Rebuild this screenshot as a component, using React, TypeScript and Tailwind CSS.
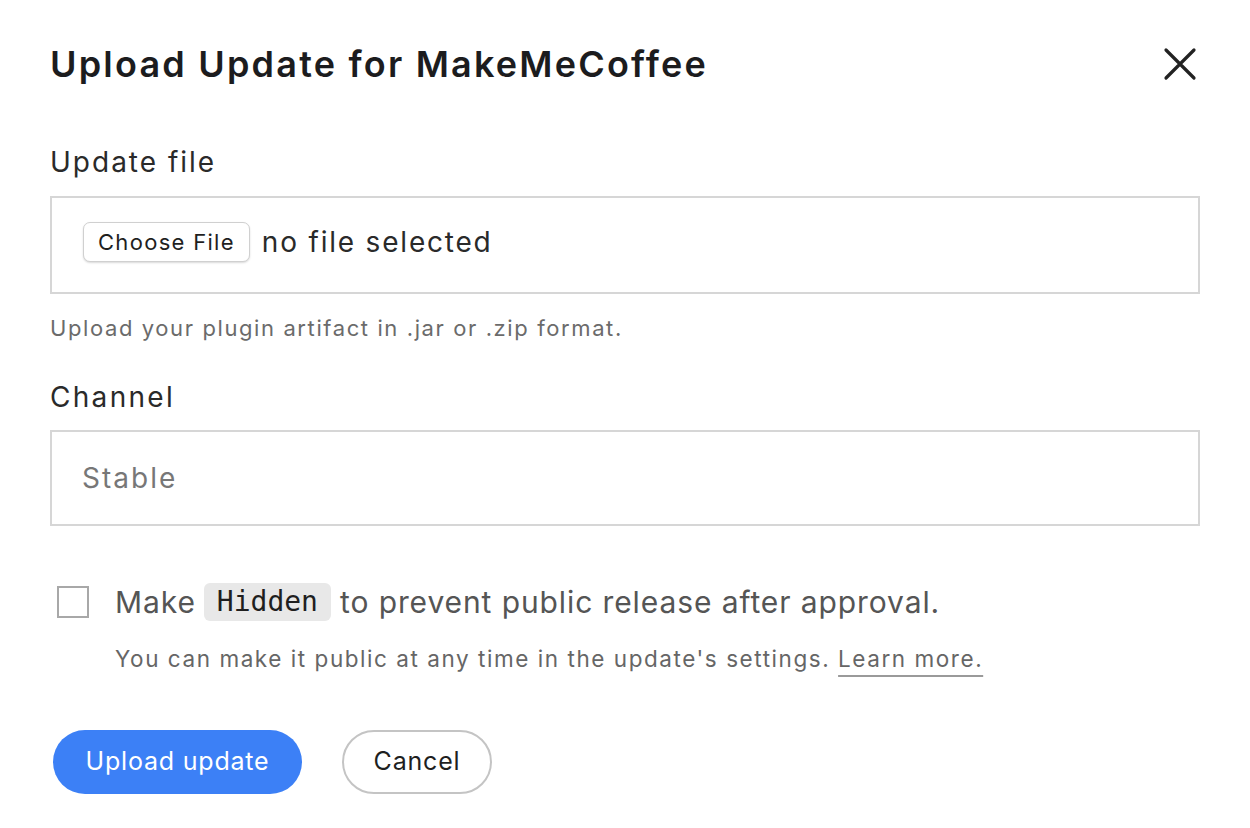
import React from "react";

export default function App() {
  return (
    <div className="w-[1250px] h-[828px] bg-white px-[50px] pt-[42px] font-['Inter',sans-serif] overflow-hidden">
      <div className="flex items-center justify-between">
        <h1 className="text-[36px] leading-[44px] font-semibold text-[#1c1c1e] tracking-[2.2px]">
          Upload Update for MakeMeCoffee
        </h1>
        <svg width="34" height="34" viewBox="0 0 34 34" className="mr-[3px]" fill="none">
          <path d="M3 3L31 31M31 3L3 31" stroke="#222222" strokeWidth="3.2" strokeLinecap="round" />
        </svg>
      </div>

      <div className="mt-[58px] text-[28px] leading-[36px] text-[#2a2a2a] tracking-[2px]">Update file</div>
      <div className="mt-[16px] h-[98px] border-2 border-[#d6d6d6] flex items-center pl-[31px] pb-[6px] gap-[12px]">
        <div className="h-[40px] px-[14px] flex items-center rounded-[7px] border border-[#d0d0d0] bg-white shadow-[0_1px_2px_rgba(0,0,0,0.15)] text-[22px] text-[#1f1f1f] tracking-[1.3px]">
          Choose File
        </div>
        <span className="text-[28px] text-[#2a2a2a] tracking-[1.8px]">no file selected</span>
      </div>
      <div className="mt-[20px] text-[22px] leading-[28px] text-[#6b6b6b] tracking-[1.6px]">
        Upload your plugin artifact in .jar or .zip format.
      </div>

      <div className="mt-[37px] text-[28px] leading-[36px] text-[#2a2a2a] tracking-[2.3px]">Channel</div>
      <div className="mt-[15px] h-[96px] border-2 border-[#d6d6d6] flex items-center pl-[30px]">
        <span className="text-[28px] text-[#777777] tracking-[2px]">Stable</span>
      </div>

      <div className="mt-[56px] flex items-center h-[40px]">
        <div className="ml-[7px] w-[32px] h-[32px] border-2 border-[#a8a8a8] bg-white" />
        <div className="ml-[26px] text-[30px] leading-[40px] text-[#555555] flex items-center tracking-[0.9px]">
          <span>Make</span>
          <code className="ml-[8px] mr-[9px] h-[38px] px-[13px] flex items-center rounded-[6px] bg-[#e8e8e8] font-['DejaVu_Sans_Mono',monospace] text-[28px] text-[#1f1f1f] tracking-normal">
            Hidden
          </code>
          <span>to prevent public release after approval.</span>
        </div>
      </div>
      <div className="mt-[22px] ml-[65px] text-[22.5px] leading-[30px] text-[#666666] tracking-[1.55px]">
        You can make it public at any time in the update's settings.{" "}
        <span className="underline decoration-[#9a9a9a] decoration-2 underline-offset-[8px]">Learn more.</span>
      </div>

      <div className="mt-[56px] ml-[3px] flex items-center gap-[40px]">
        <button className="w-[249px] h-[64px] rounded-full bg-[#3c80f6] text-white text-[25px] tracking-[0.8px]">
          Upload update
        </button>
        <button className="w-[150px] h-[64px] rounded-full border-2 border-[#c4c4c4] bg-white text-[25px] text-[#1f1f1f] tracking-[0.8px]">
          Cancel
        </button>
      </div>
    </div>
  );
}
